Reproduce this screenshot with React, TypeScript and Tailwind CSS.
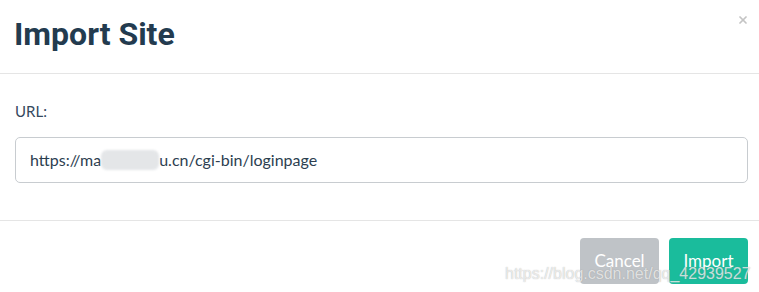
import { X } from 'lucide-react'

export default function App() {
  return (
    <div className="relative w-[759px] h-[292px] overflow-hidden bg-white font-['Lato',sans-serif] text-[#2c3e50]">
      <div className="flex items-start justify-between h-[74px] border-b border-[#e5e5e5] pl-[14px] pr-[10px]">
        <h1 className="mt-[15px] font-['Roboto',sans-serif] text-[32px] leading-[38px] font-bold text-[#233b4f]">
          Import Site
        </h1>
        <button className="mt-[14px] text-[#c4c4c4]">
          <X size={12} strokeWidth={3.5} />
        </button>
      </div>

      <div className="flex flex-col pl-[15px] pr-[11px] pt-[27px] h-[147px] border-b border-[#e5e5e5]">
        <label className="text-[15px] leading-[20px] text-[#34495e]">URL:</label>
        <div className="mt-[16px] flex items-center h-[46px] rounded-[5px] border border-[#c8ccd0] px-[14px] text-[16px] text-[#2c3e50]">
          <span>https://ma</span>
          <span className="inline-block w-[58px] h-[20px] rounded-[6px] bg-[#e4e6e8] blur-[1px]" />
          <span>u.cn/cgi-bin/loginpage</span>
        </div>
      </div>

      <div className="flex justify-end gap-[10px] pt-[17px] pr-[11px]">
        <button className="w-[79px] h-[46px] rounded-[4px] bg-[#bfc3c7] text-white text-[17px]">Cancel</button>
        <button className="w-[79px] h-[46px] rounded-[4px] bg-[#1abc9c] text-white text-[17px]">Import</button>
      </div>

      <span className="absolute left-[505px] top-[262px] font-['Liberation_Sans',sans-serif] text-[16px] text-white/70 [text-shadow:0_0_1px_rgba(120,120,120,0.6)]">
        https://blog.csdn.net/qq_42939527
      </span>
    </div>
  )
}
